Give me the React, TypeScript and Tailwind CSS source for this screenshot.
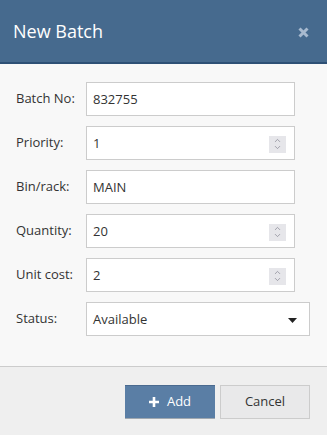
import { ChevronUp, ChevronDown } from 'lucide-react';

const rows = [
  { label: 'Batch No:', value: '832755', kind: 'text' },
  { label: 'Priority:', value: '1', kind: 'number' },
  { label: 'Bin/rack:', value: 'MAIN', kind: 'text' },
  { label: 'Quantity:', value: '20', kind: 'number' },
  { label: 'Unit cost:', value: '2', kind: 'number' },
];

function Spinner() {
  return (
    <div className="w-[17px] h-[17px] bg-[#e6e6ea] flex flex-col items-center justify-center text-[#8a8a96]">
      <ChevronUp className="w-[9px] h-[9px] -mb-[1px]" strokeWidth={2} />
      <ChevronDown className="w-[9px] h-[9px] -mt-[1px]" strokeWidth={2} />
    </div>
  );
}

export default function App() {
  return (
    <div className="w-[327px] h-[435px] flex flex-col bg-[#f8f8f8] font-['Open_Sans',sans-serif] text-[13px] text-[#333]">
      {/* Header */}
      <div className="h-[64px] shrink-0 bg-[#466a8e] border-b-2 border-[#2e5075] flex items-center justify-between pl-[13px] pr-[18px]">
        <span className="text-[18px] text-white">New Batch</span>
        <svg width="11" height="11" viewBox="0 0 11 11" className="mt-[2px]">
          <path d="M1.5 1.5 L9.5 9.5 M9.5 1.5 L1.5 9.5" stroke="#a8bacf" strokeWidth="3" />
        </svg>
      </div>

      {/* Body */}
      <div className="flex-1 flex flex-col gap-[10px] pt-[18px] pl-[16px] pr-[17px]">
        {rows.map((r) => (
          <div key={r.label} className="flex items-center">
            <span className="w-[70px] shrink-0">{r.label}</span>
            <div className="w-[209px] h-[34px] bg-white border border-[#ccc] flex items-center justify-between pl-[6px] pr-[8px] pt-[2px]">
              <span>{r.value}</span>
              {r.kind === 'number' && <Spinner />}
            </div>
          </div>
        ))}
        <div className="flex items-center">
          <span className="w-[70px] shrink-0">Status:</span>
          <div className="w-[224px] h-[34px] bg-white border border-[#ccc] flex items-center justify-between pl-[6px] pr-[12px] pt-[2px]">
            <span>Available</span>
            <svg width="9" height="5" viewBox="0 0 9 5">
              <path d="M0 0 H9 L4.5 5 Z" fill="#222" />
            </svg>
          </div>
        </div>
      </div>

      {/* Footer */}
      <div className="h-[69px] shrink-0 bg-[#efefef] border-t border-[#ccc] flex items-start justify-end gap-[5px] pt-[18px] pr-[17px]">
        <button className="w-[90px] h-[34px] bg-[#5a7ea5] border-t border-[#4a6a8f] border-b border-b-[#a0a8b0] text-white flex items-center justify-center gap-[8px]">
          <svg width="10" height="10" viewBox="0 0 10 10">
            <path d="M5 0 V10 M0 5 H10" stroke="#fff" strokeWidth="2.6" />
          </svg>
          <span>Add</span>
        </button>
        <button className="w-[90px] h-[34px] bg-[#e9e9ea] border border-[#ccc] text-[#333] flex items-center justify-center">
          Cancel
        </button>
      </div>
    </div>
  );
}
